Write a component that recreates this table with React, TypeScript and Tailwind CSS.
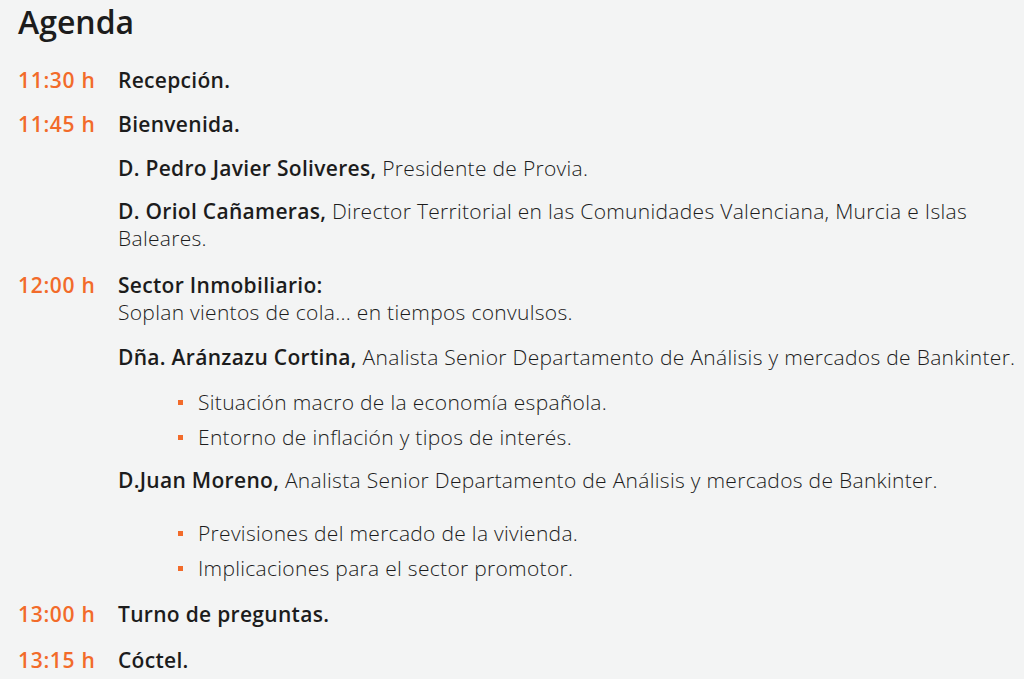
const items = [
  { time: "11:30 h", title: "Recepción." },
  { time: "11:45 h", title: "Bienvenida." },
];

function Bullets({ list }: { list: string[] }) {
  return (
    <ul className="mt-[18px] pl-[60px] flex flex-col gap-[8px]">
      {list.map((b) => (
        <li key={b} className="flex items-center">
          <span className="w-[5px] h-[5px] bg-[#f26b2a] mr-[15px] shrink-0" />
          <span>{b}</span>
        </li>
      ))}
    </ul>
  );
}

function Row({ time, children }: { time: string; children: React.ReactNode }) {
  return (
    <div className="flex">
      <div className="w-[100px] shrink-0 font-semibold text-[#f26b2a] tracking-[0.7px]">{time}</div>
      <div className="flex-1">{children}</div>
    </div>
  );
}

export default function App() {
  return (
    <div
      className="min-h-[679px] bg-[#f3f4f4] text-[#1c1c1c] pl-[18px] pr-[8px] pt-[2px] text-[21px] leading-[27px] font-light tracking-[0.3px]"
      style={{ fontFamily: '"Open Sans", sans-serif' }}
    >
      <h2 className="text-[32px] leading-[40px] font-semibold tracking-normal">Agenda</h2>

      <div className="mt-[25px] flex flex-col">
        {items.map((it) => (
          <div key={it.time} className="mb-[17px]">
            <Row time={it.time}>
              <span className="font-semibold">{it.title}</span>
            </Row>
          </div>
        ))}

        <div className="pl-[100px] flex flex-col gap-[16px]">
          <p>
            <span className="font-semibold">D. Pedro Javier Soliveres,</span> Presidente de Provia.
          </p>
          <p>
            <span className="font-semibold">D. Oriol Cañameras,</span> Director Territorial en las
            Comunidades Valenciana, Murcia e Islas Baleares.
          </p>
        </div>

        <div className="mt-[20px]">
          <Row time="12:00 h">
            <p className="font-semibold">Sector Inmobiliario:</p>
            <p>Soplan vientos de cola... en tiempos convulsos.</p>
            <p className="mt-[18px]">
              <span className="font-semibold">Dña. Aránzazu Cortina,</span> Analista Senior Departamento
              de Análisis y mercados de Bankinter.
            </p>
            <Bullets list={["Situación macro de la economía española.", "Entorno de inflación y tipos de interés."]} />
            <p className="mt-[16px]">
              <span className="font-semibold">D.Juan Moreno,</span> Analista Senior Departamento de
              Análisis y mercados de Bankinter.
            </p>
            <div className="mt-[26px]">
              <Bullets list={["Previsiones del mercado de la vivienda.", "Implicaciones para el sector promotor."]} />
            </div>
          </Row>
        </div>

        <div className="mt-[19px] mb-[19px]">
          <Row time="13:00 h">
            <span className="font-semibold">Turno de preguntas.</span>
          </Row>
        </div>
        <Row time="13:15 h">
          <span className="font-semibold">Cóctel.</span>
        </Row>
      </div>
    </div>
  );
}
